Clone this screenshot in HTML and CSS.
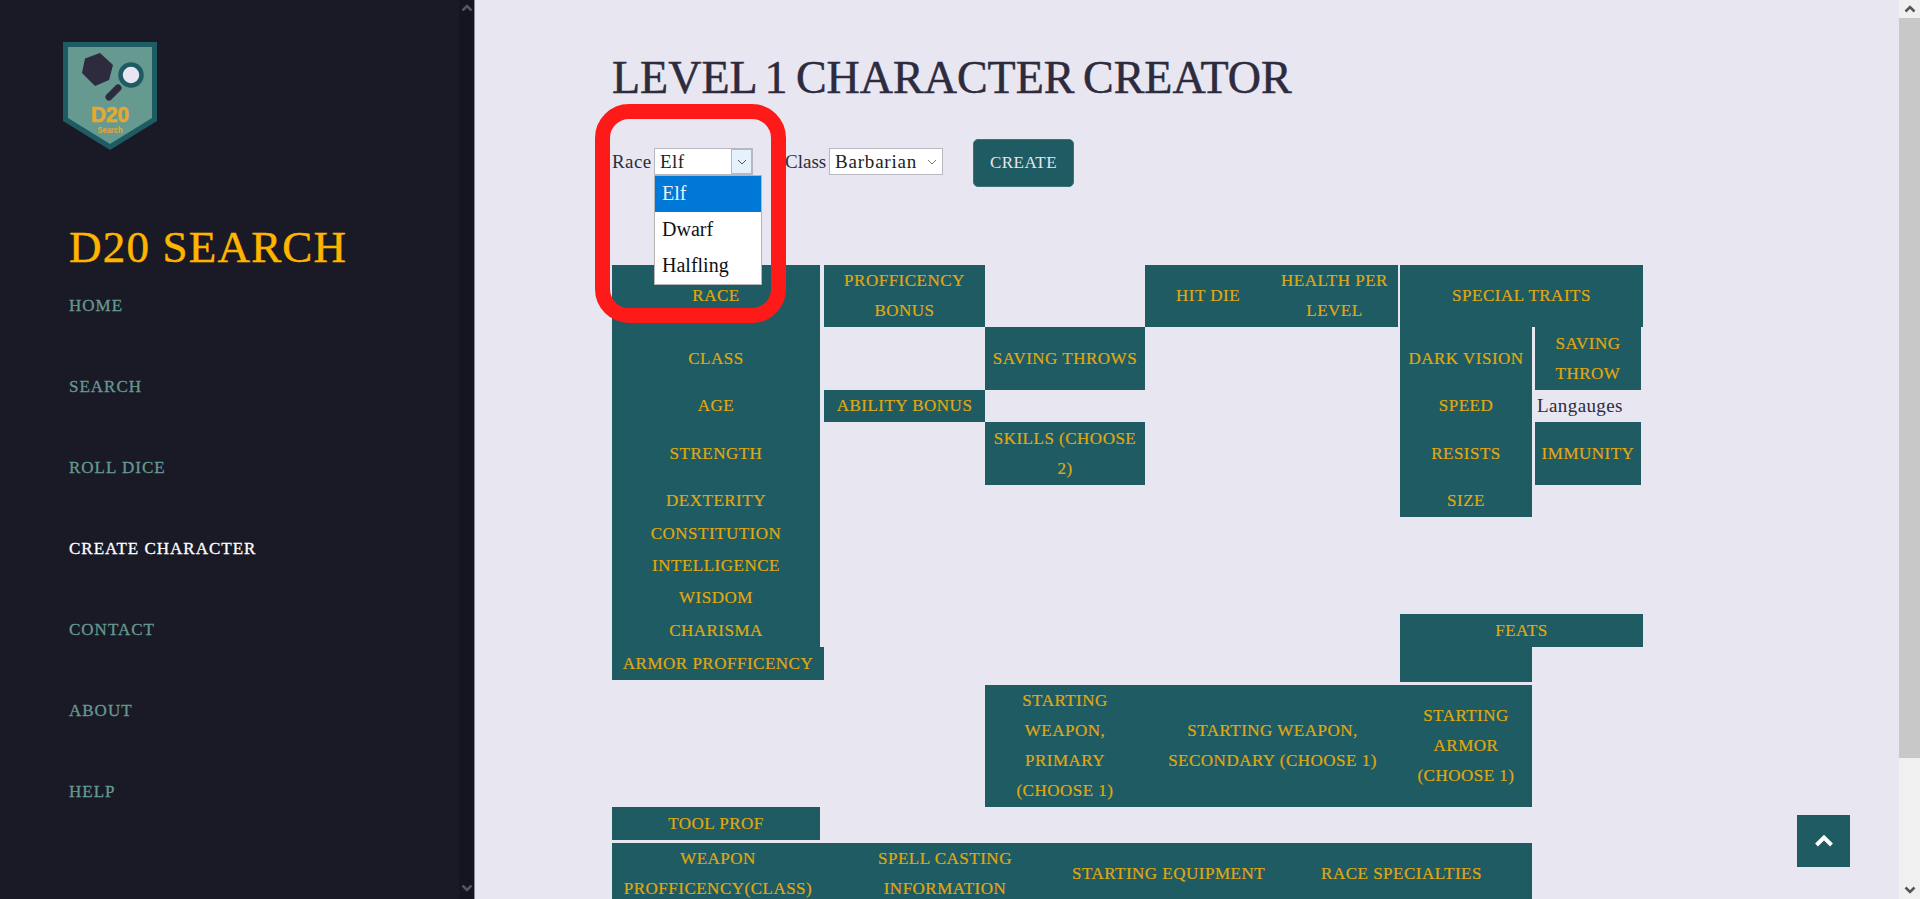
FILE: index.html
```html
<!DOCTYPE html>
<html lang="en">
<head>
  <meta charset="UTF-8" />
  <meta name="viewport" content="width=device-width, initial-scale=1.0" />
  <title>Level 1 Character Creator - D20 Search</title>
  <link rel="stylesheet" href="styles.css">
</head>
<body>
  <div class="page">
    <aside class="sidebar">
      <div class="side-inner">
        <svg class="logo" viewBox="0 0 94 108" width="94" height="108">
          <polygon points="2.5,2.5 91.5,2.5 91.5,77.5 47,105 2.5,77.5" fill="#669990" stroke="#1f5b62" stroke-width="5" />
          <polygon points="37,11 50,23 46,38 32,44 19,31 22,16.5" fill="#2d2b3d" />
          <line x1="46" y1="55" x2="55" y2="46" stroke="#2d2b3d" stroke-width="7" stroke-linecap="round" />
          <circle cx="68" cy="33" r="10.5" fill="#e8e6f1" stroke="#1f5b62" stroke-width="4.5" />
          <text class="logo-d20" x="47" y="79.5" text-anchor="middle" textLength="38" lengthAdjust="spacingAndGlyphs">D20</text>
          <text class="logo-search" x="47" y="90.5" text-anchor="middle" textLength="25" lengthAdjust="spacingAndGlyphs">Search</text>
        </svg>
        <h2 class="brand">D20 SEARCH</h2>
        <nav class="nav">
          <a href="#">HOME</a>
          <a href="#">SEARCH</a>
          <a href="#">ROLL DICE</a>
          <a href="#" class="active">CREATE CHARACTER</a>
          <a href="#">CONTACT</a>
          <a href="#">ABOUT</a>
          <a href="#">HELP</a>
        </nav>
      </div>
      <div class="side-scroll">
        <svg viewBox="0 0 12 8" width="12" height="8"><polyline points="1.5,6.5 6,2 10.5,6.5" fill="none" stroke="#55555f" stroke-width="2.5" /></svg>
        <svg viewBox="0 0 12 8" width="12" height="8"><polyline points="1.5,1.5 6,6 10.5,1.5" fill="none" stroke="#55555f" stroke-width="2.5" /></svg>
      </div>
    </aside>

    <main class="content">
      <h1>LEVEL 1 CHARACTER CREATOR</h1>

      <form class="creator">
        <span class="field-label">Race</span>
        <div class="fake-select race-select">
          <span class="fake-value">Elf</span>
          <span class="fake-arrow open">
            <svg viewBox="0 0 10 6" width="10" height="6"><polyline points="1,1 5,5 9,1" fill="none" stroke="#555" stroke-width="1" /></svg>
          </span>
          <ul class="dropdown">
            <li class="selected">Elf</li>
            <li>Dwarf</li>
            <li>Halfling</li>
          </ul>
        </div>
        <span class="field-label class-label">Class</span>
        <div class="fake-select class-select">
          <span class="fake-value">Barbarian</span>
          <span class="fake-arrow">
            <svg viewBox="0 0 10 6" width="10" height="6"><polyline points="1,1 5,5 9,1" fill="none" stroke="#777" stroke-width="1" /></svg>
          </span>
        </div>
        <button type="button" class="create-btn">CREATE</button>
      </form>

      <div class="sheet">
        <div class="cell race">RACE</div>
        <div class="cell class-cell">CLASS</div>
        <div class="cell age">AGE</div>
        <div class="cell strength">STRENGTH</div>
        <div class="cell dexterity">DEXTERITY</div>
        <div class="cell constitution">CONSTITUTION</div>
        <div class="cell intelligence">INTELLIGENCE</div>
        <div class="cell wisdom">WISDOM</div>
        <div class="cell charisma">CHARISMA</div>
        <div class="cell armor-prof">ARMOR PROFFICENCY</div>
        <div class="cell prof-bonus">PROFFICENCY BONUS</div>
        <div class="cell ability">ABILITY BONUS</div>
        <div class="cell throws">SAVING THROWS</div>
        <div class="cell skills">SKILLS (CHOOSE 2)</div>
        <div class="cell hit-die">HIT DIE</div>
        <div class="cell health">HEALTH PER LEVEL</div>
        <div class="cell traits">SPECIAL TRAITS</div>
        <div class="cell dark-vision">DARK VISION</div>
        <div class="cell speed">SPEED</div>
        <div class="cell resists">RESISTS</div>
        <div class="cell size">SIZE</div>
        <div class="cell save-throw">SAVING THROW</div>
        <div class="languages">Langauges</div>
        <div class="cell immunity">IMMUNITY</div>
        <div class="cell feats">FEATS</div>
        <div class="cell feats-value"></div>
        <div class="cell weapon-one">STARTING WEAPON, PRIMARY (CHOOSE 1)</div>
        <div class="cell weapon-two">STARTING WEAPON, SECONDARY (CHOOSE 1)</div>
        <div class="cell armor-start">STARTING ARMOR (CHOOSE 1)</div>
        <div class="cell tool">TOOL PROF</div>
        <div class="cell weapon-prof">WEAPON PROFFICENCY(CLASS)</div>
        <div class="cell spell">SPELL CASTING INFORMATION</div>
        <div class="cell equipment">STARTING EQUIPMENT</div>
        <div class="cell specialties">RACE SPECIALTIES</div>
      </div>

      <div class="highlight"></div>
      <a href="#" class="to-top">
        <svg viewBox="0 0 20 14" width="20" height="14"><polyline points="2.5,11 10,3.5 17.5,11" fill="none" stroke="#fff" stroke-width="4" /></svg>
      </a>
    </main>

    <div class="page-scroll">
      <div class="scroll-btn">
        <svg viewBox="0 0 12 8" width="12" height="8"><polyline points="1.5,6.5 6,2 10.5,6.5" fill="none" stroke="#555" stroke-width="2.5" /></svg>
      </div>
      <div class="scroll-thumb"></div>
      <div class="scroll-btn">
        <svg viewBox="0 0 12 8" width="12" height="8"><polyline points="1.5,1.5 6,6 10.5,1.5" fill="none" stroke="#555" stroke-width="2.5" /></svg>
      </div>
    </div>
  </div>
</body>
</html>
```

FILE: styles.css
```css
* {
  box-sizing: border-box;
}

body {
  margin: 0;
  font-family: 'Liberation Serif', serif;
  color: #2d2b3d;
  background: #e8e6f1;
}

.page {
  display: flex;
  height: 899px;
  overflow: hidden;
}

/* sidebar */
.sidebar {
  width: 475px;
  flex-shrink: 0;
  display: flex;
  background: #1a1a26;
  border-right: 1px solid #8f8e9c;
}

.side-inner {
  flex: 1;
  padding: 42px 0 0 63px;
}

.logo {
  display: block;
}

.logo-d20 {
  font-family: 'Liberation Sans', sans-serif;
  font-weight: bold;
  font-size: 22px;
  fill: #e6a92f;
  stroke: #e6a92f;
  stroke-width: 0.7px;
}

.logo-search {
  font-family: 'Liberation Sans', sans-serif;
  font-weight: bold;
  font-size: 9.5px;
  fill: #e6a92f;
}

.brand {
  margin: 72px 0 0 6px;
  font-size: 45px;
  line-height: 50px;
  font-weight: normal;
  color: #ffb400;
  letter-spacing: 1.2px;
  -webkit-text-stroke: 0.5px #ffb400;
}

.nav {
  display: flex;
  flex-direction: column;
  margin: 0 0 0 6px;
  padding-top: 22px;
  gap: 57px;
}

.nav a {
  font-size: 17px;
  line-height: 24px;
  color: #669990;
  text-decoration: none;
  letter-spacing: 1px;
  -webkit-text-stroke: 0.3px #669990;
}

.nav a.active {
  color: #fff;
  -webkit-text-stroke: 0.3px #fff;
}

.side-scroll {
  width: 15px;
  background: #15151f;
  display: flex;
  flex-direction: column;
  justify-content: space-between;
  align-items: center;
  padding: 4px 0 7px;
}

/* main area */
.content {
  flex: 1;
  position: relative;
  padding: 0 0 0 137px;
}

h1 {
  margin: 0;
  padding-top: 53px;
  font-size: 46px;
  line-height: 50px;
  font-weight: normal;
  word-spacing: -3px;
  -webkit-text-stroke: 0.5px #2d2b3d;
}

.creator {
  display: flex;
  align-items: center;
  height: 48px;
  margin-top: 36px;
  font-size: 19px;
  letter-spacing: 0.4px;
}

.field-label {
  width: 42px;
  margin-bottom: 3px;
}

.class-label {
  width: 44px;
  margin-left: 32px;
  letter-spacing: 0;
}

.fake-select {
  position: relative;
  display: flex;
  align-items: center;
  height: 27px;
  margin-bottom: 3px;
  background: #fff;
  border: 1px solid #b9b8c2;
  padding-left: 5px;
  color: #222;
}

.race-select {
  width: 99px;
}

.class-select {
  width: 114px;
  letter-spacing: 0.8px;
}

.fake-value {
  flex: 1;
}

.fake-arrow {
  display: flex;
  align-items: center;
  justify-content: center;
  width: 21px;
  height: 100%;
}

.fake-arrow.open {
  background: #e5f1fb;
  border: 1px solid #8ec5f0;
}

.dropdown {
  position: absolute;
  left: -1px;
  top: 26px;
  width: 108px;
  margin: 0;
  padding: 0;
  list-style: none;
  background: #fff;
  border: 1px solid #b5b5b5;
  font-size: 20px;
  letter-spacing: 0;
  color: #111;
  z-index: 2;
}

.dropdown li {
  height: 36px;
  line-height: 35px;
  padding-left: 7px;
}

.dropdown li.selected {
  background: #0078d7;
  color: #e8f2fb;
}

.create-btn {
  width: 101px;
  height: 48px;
  margin-left: 30px;
  border: 1px solid #3d7278;
  border-radius: 5px;
  background: #1f5b62;
  color: #e8e6f1;
  font-family: inherit;
  font-size: 17px;
  letter-spacing: 0.5px;
}

/* the sheet */
.sheet {
  display: grid;
  width: 1031px;
  margin-top: 78px;
  grid-template-columns: 208px 4px 161px 81px 79px 126px 127px 2px 132px 3px 106px 2px;
  grid-template-rows: 62px 63px 32px 63px 32px 33px 32px 32px 33px 33px 2px 3px 122px 33px 3px 62px;
}

.cell {
  display: flex;
  align-items: center;
  justify-content: center;
  text-align: center;
  background: #1f5b62;
  color: #e0a90f;
  font-size: 17px;
  line-height: 30px;
  letter-spacing: 0.5px;
  -webkit-text-stroke: 0.2px #e0a90f;
  padding: 0 2px;
}

.race { grid-area: 1 / 1 / 2 / 2; }
.class-cell { grid-area: 2 / 1 / 3 / 2; }
.age { grid-area: 3 / 1 / 4 / 2; }
.strength { grid-area: 4 / 1 / 5 / 2; }
.dexterity { grid-area: 5 / 1 / 6 / 2; }
.constitution { grid-area: 6 / 1 / 7 / 2; }
.intelligence { grid-area: 7 / 1 / 8 / 2; }
.wisdom { grid-area: 8 / 1 / 9 / 2; }
.charisma { grid-area: 9 / 1 / 10 / 2; }
.armor-prof { grid-area: 10 / 1 / 11 / 3; }
.prof-bonus { grid-area: 1 / 3 / 2 / 4; }
.ability { grid-area: 3 / 3 / 4 / 4; }
.throws { grid-area: 2 / 4 / 3 / 6; }
.skills { grid-area: 4 / 4 / 5 / 6; }
.hit-die { grid-area: 1 / 6 / 2 / 7; }
.health { grid-area: 1 / 7 / 2 / 8; }
.traits { grid-area: 1 / 9 / 2 / 13; }
.dark-vision { grid-area: 2 / 9 / 3 / 10; }
.speed { grid-area: 3 / 9 / 4 / 10; }
.resists { grid-area: 4 / 9 / 5 / 10; }
.size { grid-area: 5 / 9 / 6 / 10; }
.save-throw { grid-area: 2 / 11 / 3 / 12; }
.languages {
  grid-area: 3 / 11 / 4 / 12;
  align-self: center;
  padding-left: 2px;
  font-size: 19px;
  letter-spacing: 0.4px;
}
.immunity { grid-area: 4 / 11 / 5 / 12; }
.feats { grid-area: 9 / 9 / 10 / 13; }
.feats-value { grid-area: 10 / 9 / 12 / 10; }
.weapon-one { grid-area: 13 / 4 / 14 / 6; padding: 0 20px; }
.weapon-two { grid-area: 13 / 6 / 14 / 9; }
.armor-start { grid-area: 13 / 9 / 14 / 10; }
.tool { grid-area: 14 / 1 / 15 / 2; }
.weapon-prof { grid-area: 16 / 1 / 17 / 3; }
.spell { grid-area: 16 / 3 / 17 / 5; padding: 0 30px; }
.equipment { grid-area: 16 / 5 / 17 / 7; }
.specialties { grid-area: 16 / 7 / 17 / 10; }

/* red marker drawn over the screenshot */
.highlight {
  position: absolute;
  left: 120px;
  top: 104px;
  width: 191px;
  height: 219px;
  border: 15px solid #ff1a1a;
  border-radius: 34px;
  pointer-events: none;
}

.to-top {
  position: absolute;
  left: 1322px;
  top: 815px;
  width: 53px;
  height: 52px;
  display: flex;
  align-items: center;
  justify-content: center;
  background: #1f5b62;
}

/* window scrollbar */
.page-scroll {
  width: 21px;
  flex-shrink: 0;
  display: flex;
  flex-direction: column;
  background: #f0f0f0;
}

.scroll-btn {
  height: 18px;
  display: flex;
  align-items: center;
  justify-content: center;
}

.scroll-thumb {
  height: 740px;
  background: #c8c8c8;
  margin-bottom: auto;
}
```
